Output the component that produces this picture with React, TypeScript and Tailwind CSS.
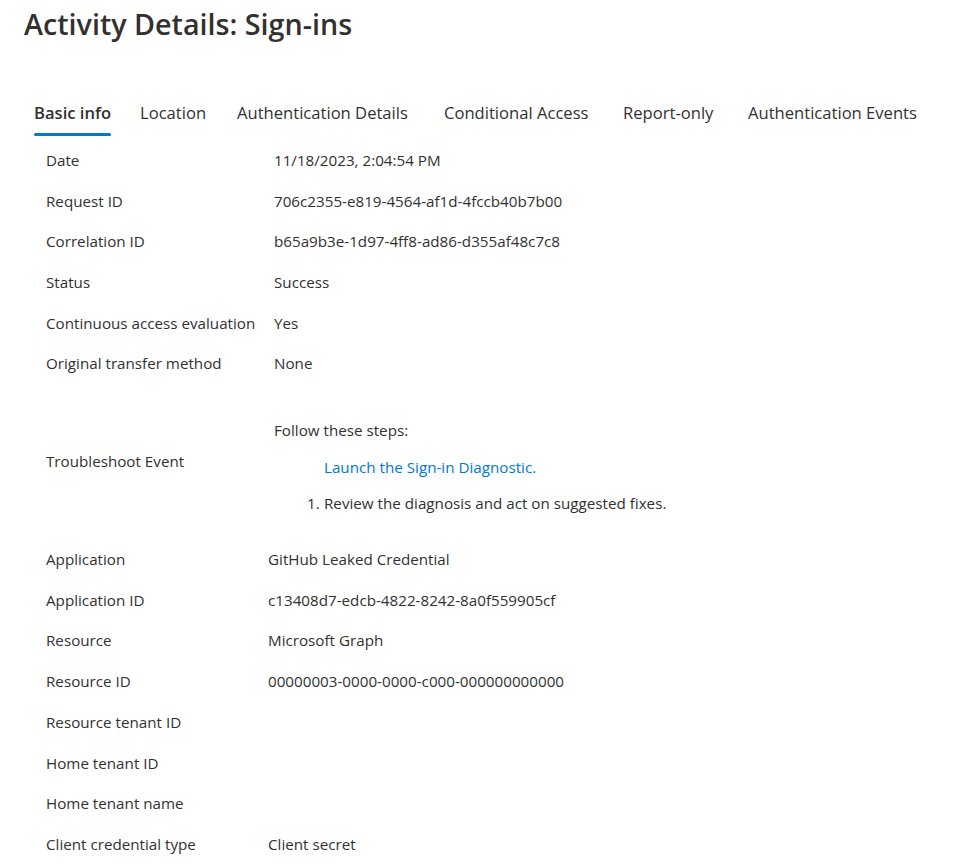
import React from 'react';

// tab name + slot width, so each label starts where the reference has it
const TABS: [string, string][] = [
  ['Basic info', 'w-[106px]'],
  ['Location', 'w-[97px]'],
  ['Authentication Details', 'w-[207px]'],
  ['Conditional Access', 'w-[179px]'],
  ['Report-only', 'w-[125px]'],
  ['Authentication Events', ''],
];

const TOP_ROWS: [string, string][] = [
  ['Date', '11/18/2023, 2:04:54 PM'],
  ['Request ID', '706c2355-e819-4564-af1d-4fccb40b7b00'],
  ['Correlation ID', 'b65a9b3e-1d97-4ff8-ad86-d355af48c7c8'],
  ['Status', 'Success'],
  ['Continuous access evaluation', 'Yes'],
  ['Original transfer method', 'None'],
];

const BOTTOM_ROWS: [string, string][] = [
  ['Application', 'GitHub Leaked Credential'],
  ['Application ID', 'c13408d7-edcb-4822-8242-8a0f559905cf'],
  ['Resource', 'Microsoft Graph'],
  ['Resource ID', '00000003-0000-0000-c000-000000000000'],
  ['Resource tenant ID', ''],
  ['Home tenant ID', ''],
  ['Home tenant name', ''],
  ['Client credential type', 'Client secret'],
];

const Row = ({ label, value, labelWidth }: { label: string; value: string; labelWidth: string }) => (
  <div className="flex items-center h-[40.7px]">
    <div className={`${labelWidth} shrink-0`}>{label}</div>
    <div>{value}</div>
  </div>
);

export default function App() {
  return (
    <div className="min-h-screen bg-white text-[#323130] font-['Open_Sans',sans-serif]">
      <h1 className="pl-6 pt-[5px] text-[28.7px] leading-[38px] font-semibold">Activity Details: Sign-ins</h1>

      <div className="flex pl-[34px] mt-[55px] text-[16.6px]">
        {TABS.map(([t, w], i) => (
          <div key={t} className={`${w} shrink-0`}>
            <div className="inline-flex flex-col">
              <span className={`leading-[30px] whitespace-nowrap ${i === 0 ? 'font-semibold' : ''}`}>{t}</span>
              <div className={`h-[3px] mt-[5px] rounded-sm ${i === 0 ? 'bg-[#0078d4]' : 'bg-transparent'}`} />
            </div>
          </div>
        ))}
      </div>

      <div className="pl-[46px] text-[15.2px] mt-[4px]">
        {TOP_ROWS.map(([l, v]) => (
          <Row key={l} label={l} value={v} labelWidth="w-[228px]" />
        ))}

        <div className="flex items-center h-[155px]">
          <div className="w-[228px] shrink-0">Troubleshoot Event</div>
          <div className="pt-[10px]">
            <div className="leading-[20px]">Follow these steps:</div>
            <div className="pl-[50px] mt-[17px] leading-[20px]">
              <a className="text-[#0078d4]">Launch the Sign-in Diagnostic.</a>
            </div>
            <div className="flex pl-[33px] mt-[16px] leading-[20px]">
              <span className="w-[17px]">1.</span>
              <span>Review the diagnosis and act on suggested fixes.</span>
            </div>
          </div>
        </div>

        {BOTTOM_ROWS.map(([l, v]) => (
          <Row key={l} label={l} value={v} labelWidth="w-[222px]" />
        ))}
      </div>
    </div>
  );
}
